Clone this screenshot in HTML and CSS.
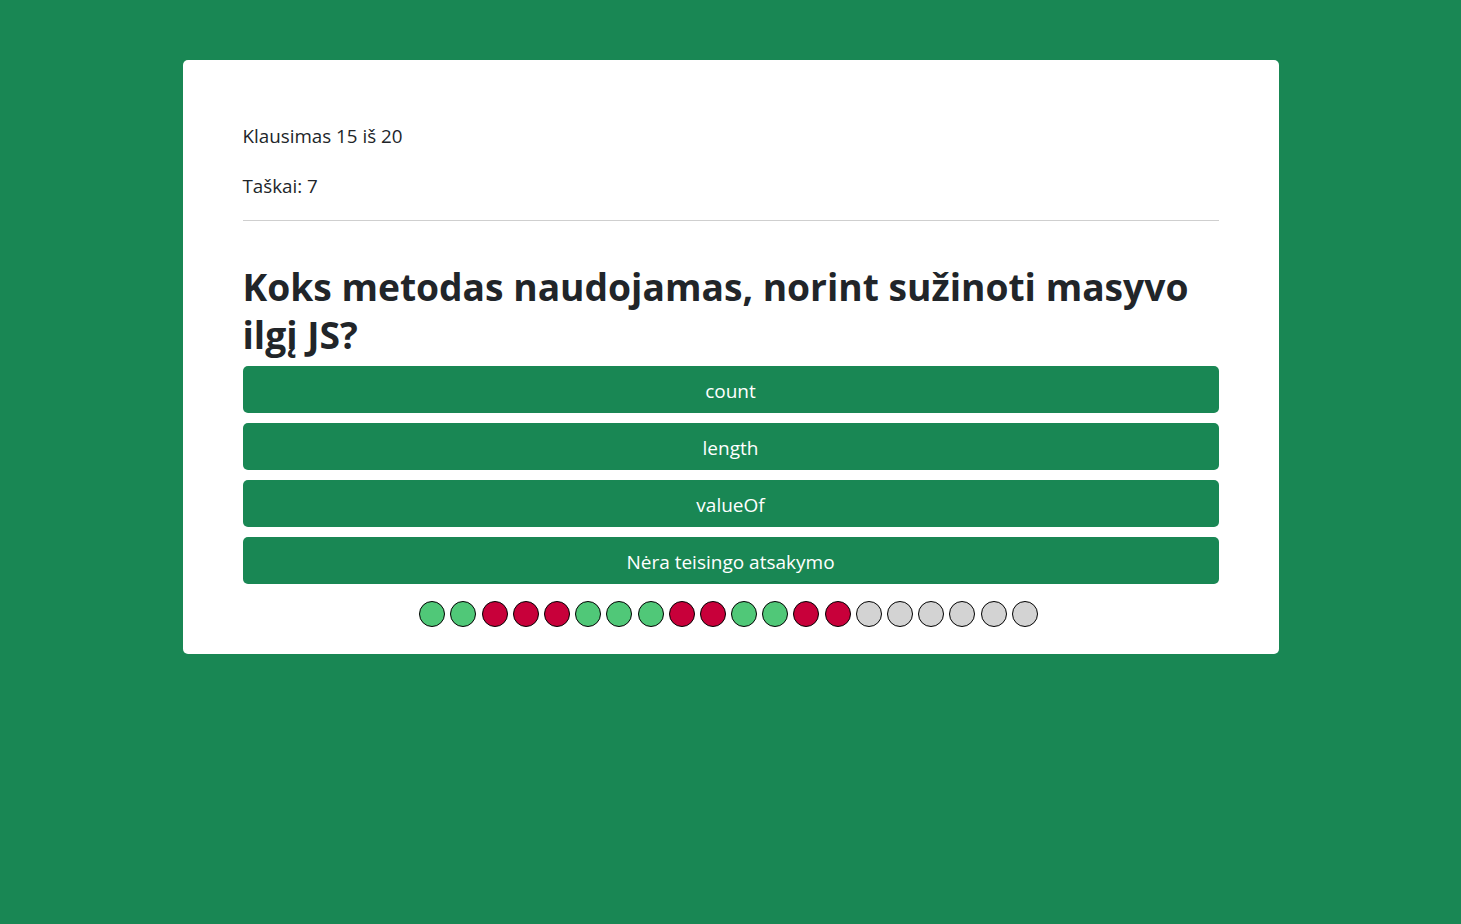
FILE: index.html
```html
<!DOCTYPE html>
<html lang="lt">
<head>
<meta charset="utf-8">
<title>Quiz</title>
<link rel="stylesheet" href="styles.css">
</head>
<body>
<main class="card">
  <p class="meta">Klausimas 15 iš 20</p>
  <p class="meta">Taškai: 7</p>
  <hr class="rule">
  <h1 class="question">Koks metodas naudojamas, norint sužinoti masyvo ilgį JS?</h1>
  <div class="answers">
    <button class="answer">count</button>
    <button class="answer">length</button>
    <button class="answer">valueOf</button>
    <button class="answer">Nėra teisingo atsakymo</button>
  </div>
  <div class="progress">
    <span class="dot ok"></span><span class="dot ok"></span><span class="dot bad"></span><span class="dot bad"></span><span class="dot bad"></span><span class="dot ok"></span><span class="dot ok"></span><span class="dot ok"></span><span class="dot bad"></span><span class="dot bad"></span><span class="dot ok"></span><span class="dot ok"></span><span class="dot bad"></span><span class="dot bad"></span><span class="dot todo"></span><span class="dot todo"></span><span class="dot todo"></span><span class="dot todo"></span><span class="dot todo"></span><span class="dot todo"></span>
  </div>
</main>
</body>
</html>
```
FILE: styles.css
```css
* { box-sizing: border-box; }
html, body { margin: 0; }
body {
  background: #198754;
  font-family: "Open Sans", "Noto Sans", sans-serif;
  color: #212529;
  padding-top: 60px;
  min-height: 100vh;
}
.card {
  width: 1096px;
  margin: 0 auto;
  background: #fff;
  border-radius: 5px;
  padding: 61px 60px 27px;
}
.meta {
  margin: 0 0 20px;
  font-size: 18.8px;
  line-height: 30px;
}
.rule {
  border: 0;
  border-top: 1px solid #cfcfcf;
  margin: -1px 0 42px;
}
.question {
  font-size: 37.2px;
  font-weight: 700;
  line-height: 48px;
  margin: 0 0 7px;
}
.answers {
  display: flex;
  flex-direction: column;
  gap: 10px;
}
.answer {
  height: 47px;
  border: 0;
  border-radius: 5px;
  background: #198754;
  color: #fff;
  font-family: inherit;
  font-size: 19px;
  padding: 2px 0 0;
}
.progress {
  display: flex;
  justify-content: center;
  gap: 5.2px;
  margin-top: 17px;
  padding-right: 4px;
}
.dot {
  width: 26px;
  height: 26px;
  border-radius: 50%;
  border: 1px solid #000;
}
.ok { background: #50c878; }
.bad { background: #c8003a; }
.todo { background: #d3d3d3; }
```
